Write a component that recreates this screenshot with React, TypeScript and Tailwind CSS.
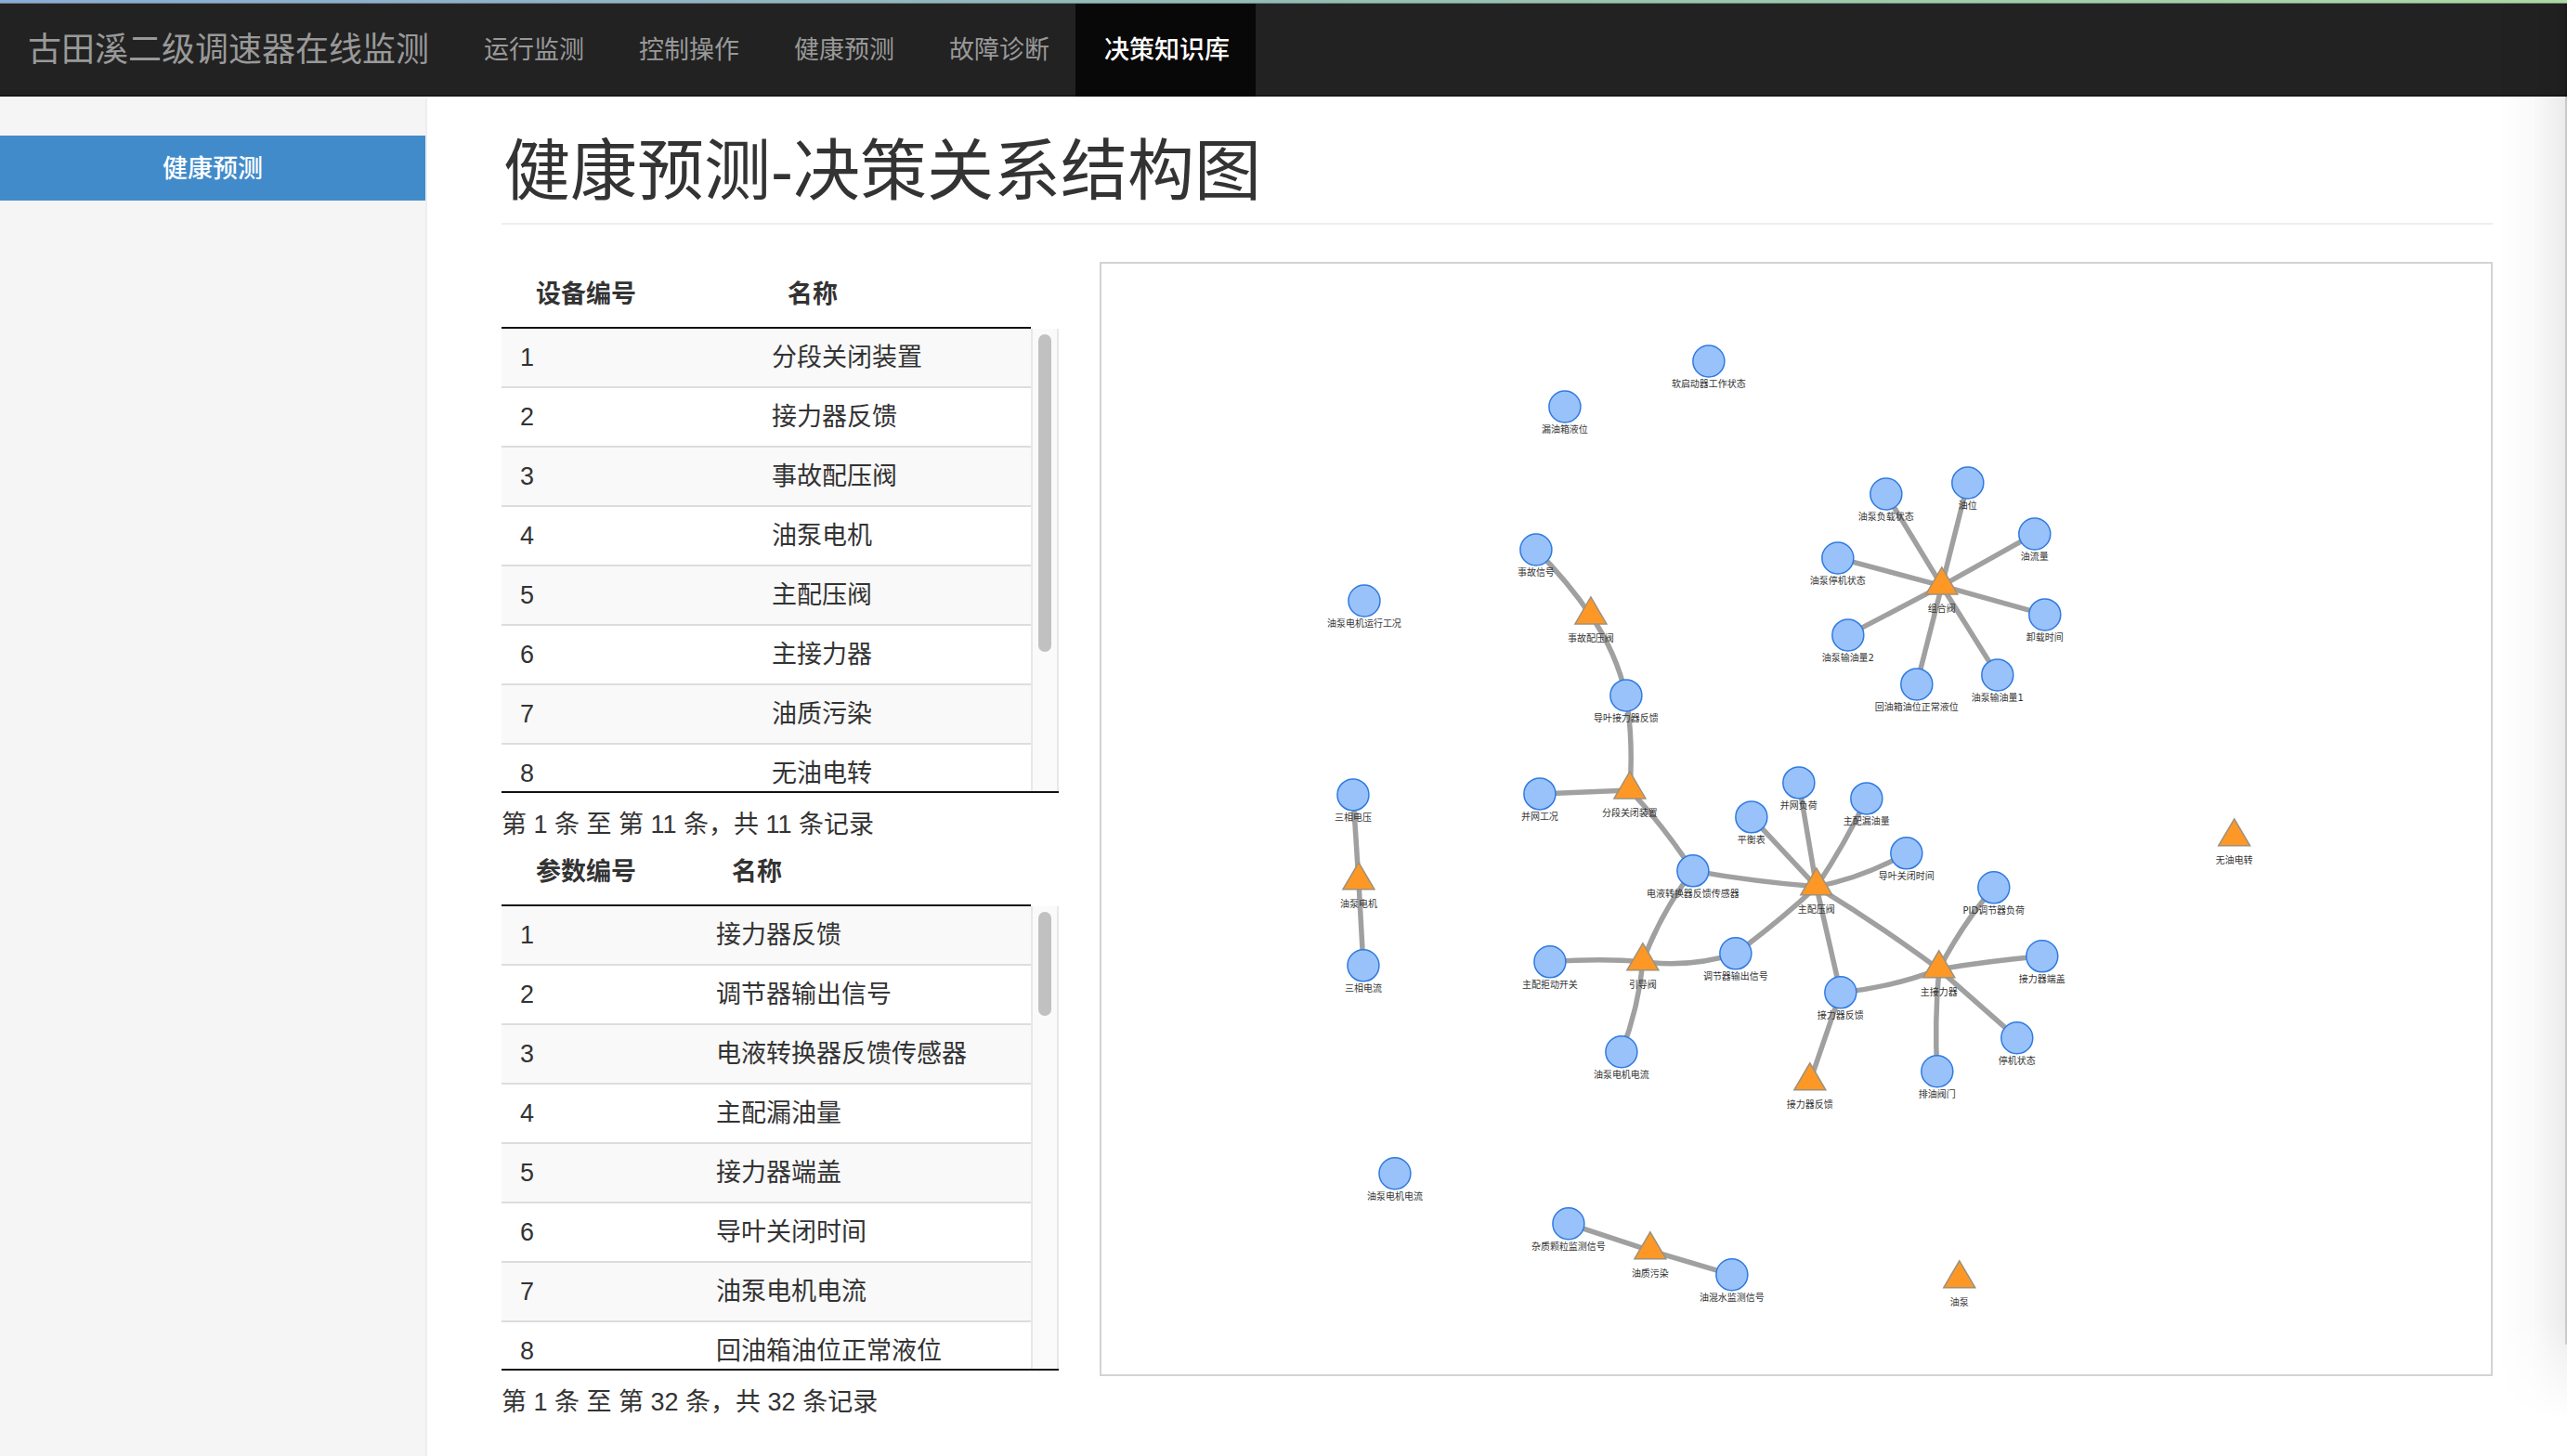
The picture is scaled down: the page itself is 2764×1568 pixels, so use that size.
const FONT = "font-['Liberation_Sans','Noto_Sans_CJK_SC',sans-serif]";

type NodeDef = { id: string; x: number; y: number; label: string; device?: boolean };
type EdgeDef = { from: string; to: string; via?: [number, number] };

const navItems = ["运行监测", "控制操作", "健康预测", "故障诊断", "决策知识库"];

const devices = ["分段关闭装置", "接力器反馈", "事故配压阀", "油泵电机", "主配压阀", "主接力器", "油质污染", "无油电转"];
const params = ["接力器反馈", "调节器输出信号", "电液转换器反馈传感器", "主配漏油量", "接力器端盖", "导叶关闭时间", "油泵电机电流", "回油箱油位正常液位"];

const nodes: NodeDef[] = [
  { id: "soft", x: 1840, y: 389, label: "软启动器工作状态" },
  { id: "leakTank", x: 1685, y: 438, label: "漏油箱液位" },
  { id: "accSignal", x: 1654, y: 592, label: "事故信号" },
  { id: "pumpRun", x: 1469, y: 647, label: "油泵电机运行工况" },
  { id: "vaneFeedback", x: 1751, y: 749, label: "导叶接力器反馈" },
  { id: "accValve", x: 1713, y: 663, label: "事故配压阀", device: true },
  { id: "pumpLoad", x: 2031, y: 532, label: "油泵负载状态" },
  { id: "oilLevel", x: 2119, y: 520, label: "油位" },
  { id: "oilFlow", x: 2191, y: 575, label: "油流量" },
  { id: "pumpStop", x: 1979, y: 601, label: "油泵停机状态" },
  { id: "pumpOut2", x: 1990, y: 684, label: "油泵输油量2" },
  { id: "returnTank", x: 2064, y: 737, label: "回油箱油位正常液位" },
  { id: "pumpOut1", x: 2151, y: 727, label: "油泵输油量1" },
  { id: "unload", x: 2202, y: 662, label: "卸载时间" },
  { id: "combo", x: 2091, y: 631, label: "组合阀", device: true },
  { id: "voltage", x: 1457, y: 856, label: "三相电压" },
  { id: "pumpMotor", x: 1463, y: 949, label: "油泵电机", device: true },
  { id: "current", x: 1468, y: 1040, label: "三相电流" },
  { id: "gridState", x: 1658, y: 855, label: "并网工况" },
  { id: "segment", x: 1755, y: 851, label: "分段关闭装置", device: true },
  { id: "ehSensor", x: 1823, y: 938, label: "电液转换器反馈传感器" },
  { id: "refuse", x: 1669, y: 1036, label: "主配拒动开关" },
  { id: "pilot", x: 1769, y: 1036, label: "引导阀", device: true },
  { id: "motorCurrent", x: 1746, y: 1133, label: "油泵电机电流" },
  { id: "regulator", x: 1869, y: 1027, label: "调节器输出信号" },
  { id: "gridLoad", x: 1937, y: 843, label: "并网负荷" },
  { id: "mainLeak", x: 2010, y: 860, label: "主配漏油量" },
  { id: "balance", x: 1886, y: 880, label: "平衡表" },
  { id: "vaneTime", x: 2053, y: 919, label: "导叶关闭时间" },
  { id: "mainValve", x: 1956, y: 955, label: "主配压阀", device: true },
  { id: "pidLoad", x: 2147, y: 956, label: "PID调节器负荷" },
  { id: "cover", x: 2199, y: 1030, label: "接力器端盖" },
  { id: "stopState", x: 2172, y: 1118, label: "停机状态" },
  { id: "drain", x: 2086, y: 1154, label: "排油阀门" },
  { id: "servoParam", x: 1982, y: 1069, label: "接力器反馈" },
  { id: "mainServo", x: 2088, y: 1044, label: "主接力器", device: true },
  { id: "servoDevice", x: 1949, y: 1165, label: "接力器反馈", device: true },
  { id: "motorCurrent2", x: 1502, y: 1264, label: "油泵电机电流" },
  { id: "particles", x: 1689, y: 1318, label: "杂质颗粒监测信号" },
  { id: "pollution", x: 1777, y: 1347, label: "油质污染", device: true },
  { id: "water", x: 1865, y: 1373, label: "油混水监测信号" },
  { id: "pump", x: 2110, y: 1378, label: "油泵", device: true },
  { id: "oilless", x: 2406, y: 902, label: "无油电转", device: true },
];

// "via" is the point that the middle of a curved edge passes through.
const edges: EdgeDef[] = [
  { from: "accSignal", to: "accValve", via: [1686, 627] },
  { from: "accValve", to: "vaneFeedback", via: [1736, 704] },
  { from: "vaneFeedback", to: "segment", via: [1756, 799] },
  { from: "gridState", to: "segment" },
  { from: "segment", to: "ehSensor", via: [1791, 893] },
  { from: "ehSensor", to: "pilot", via: [1792, 985] },
  { from: "refuse", to: "pilot", via: [1722, 1034] },
  { from: "pilot", to: "regulator", via: [1820, 1037] },
  { from: "pilot", to: "motorCurrent", via: [1761, 1085] },
  { from: "voltage", to: "pumpMotor" },
  { from: "pumpMotor", to: "current" },
  { from: "ehSensor", to: "mainValve", via: [1889, 948] },
  { from: "balance", to: "mainValve" },
  { from: "gridLoad", to: "mainValve" },
  { from: "mainLeak", to: "mainValve", via: [1985, 908] },
  { from: "vaneTime", to: "mainValve", via: [2006, 941] },
  { from: "mainValve", to: "regulator", via: [1914, 992] },
  { from: "mainValve", to: "servoParam" },
  { from: "mainValve", to: "mainServo", via: [2023, 998] },
  { from: "servoParam", to: "mainServo", via: [2036, 1060] },
  { from: "servoParam", to: "servoDevice" },
  { from: "pidLoad", to: "mainServo", via: [2115, 998] },
  { from: "cover", to: "mainServo", via: [2143, 1036] },
  { from: "stopState", to: "mainServo" },
  { from: "drain", to: "mainServo", via: [2085, 1100] },
  { from: "pumpLoad", to: "combo" },
  { from: "oilLevel", to: "combo" },
  { from: "oilFlow", to: "combo" },
  { from: "pumpStop", to: "combo" },
  { from: "pumpOut2", to: "combo" },
  { from: "returnTank", to: "combo" },
  { from: "pumpOut1", to: "combo" },
  { from: "unload", to: "combo" },
  { from: "particles", to: "pollution" },
  { from: "pollution", to: "water" },
];

const byId = new Map(nodes.map((n) => [n.id, n]));

function edgePath({ from, to, via }: EdgeDef) {
  const a = byId.get(from)!;
  const b = byId.get(to)!;
  if (!via) return `M${a.x} ${a.y}L${b.x} ${b.y}`;
  const cx = 2 * via[0] - (a.x + b.x) / 2;
  const cy = 2 * via[1] - (a.y + b.y) / 2;
  return `M${a.x} ${a.y}Q${cx} ${cy} ${b.x} ${b.y}`;
}

function RelationGraph() {
  return (
    <svg viewBox="1186 284 1496 1196" className="block h-auto w-full" role="img" aria-label="决策关系结构图">
      <g fill="none" stroke="#a0a0a0" strokeWidth="5.5">
        {edges.map((e) => (
          <path key={e.from + e.to} d={edgePath(e)} />
        ))}
      </g>
      {nodes.map((n) => (
        <g key={n.id}>
          {n.device ? (
            <path
              d={`M${n.x} ${n.y - 20}L${n.x + 17} ${n.y + 9}H${n.x - 17}Z`}
              fill="#fd9827"
              stroke="#9e917c"
              strokeWidth="1.5"
            />
          ) : (
            <circle cx={n.x} cy={n.y} r="17" fill="#9ac2fa" stroke="#2f7be0" strokeWidth="1.5" />
          )}
          <text
            x={n.x}
            y={n.y + 28}
            textAnchor="middle"
            className="fill-[#343434] font-['DejaVu_Sans','Noto_Sans_CJK_SC',sans-serif] text-[10px]"
          >
            {n.label}
          </text>
        </g>
      ))}
    </svg>
  );
}

type RecordTableProps = {
  idTitle: string;
  rows: string[];
  total: number;
  idColumn: string;
  thumb: string;
};

function RecordTable({ idTitle, rows, total, idColumn, thumb }: RecordTableProps) {
  return (
    <section>
      <div className="flex h-[572px] overflow-hidden border-b-2 border-[#111]">
        <div className="min-w-0 flex-1">
          <table className="w-full table-fixed border-separate border-spacing-0 text-left">
            <thead>
              <tr className="h-[72px]">
                <th className={`${idColumn} border-b-2 border-[#111] pl-[37px] font-bold`}>{idTitle}</th>
                <th className="border-b-2 border-[#111] pl-[37px] font-bold">名称</th>
              </tr>
            </thead>
            <tbody>
              {rows.map((name, i) => (
                <tr
                  key={name}
                  className="h-16 odd:bg-[#f9f9f9] first:h-[62px] [&>td]:border-t-2 [&>td]:border-[#ddd] first:[&>td]:border-t-0"
                >
                  <td className="pl-5">{i + 1}</td>
                  <td className="pl-5 whitespace-nowrap">{name}</td>
                </tr>
              ))}
            </tbody>
          </table>
        </div>
        <div className="mt-[72px] w-[30px] border-x-2 border-[#e8e8e8] bg-[#fafafa] px-[6px] pt-1.5">
          <div className={`${thumb} w-full rounded-full bg-[#c1c1c1]`} />
        </div>
      </div>
      <p className="pt-[18px] leading-8">
        第 1 条 至 第 {total} 条，共 {total} 条记录
      </p>
    </section>
  );
}

export default function App() {
  return (
    <div className={`${FONT} relative flex min-h-screen flex-col bg-white text-[27px] leading-10 text-[#333]`}>
      <div className="h-1 border-b border-[#777] bg-linear-to-r from-[#86aedb] via-[#92bfb4] to-[#a9dba0]" />
      <header className="flex h-[100px] items-stretch border-b-2 border-[#181818] bg-[#222]">
        <a href="#" className="flex items-center pt-0.5 pr-7 pl-[30px] text-4xl text-[#999]">
          古田溪二级调速器在线监测
        </a>
        <nav className="-mb-0.5 flex">
          {navItems.map((item) => (
            <a
              key={item}
              href="#"
              className="flex items-center pr-7 pl-[31px] text-[#999] last:bg-[#080808] last:font-medium last:text-white"
            >
              {item}
            </a>
          ))}
        </nav>
      </header>
      <div className="mt-0.5 flex flex-1">
        <aside className="w-[460px] shrink-0 border-r-2 border-[#eee] bg-[#f5f5f5] pt-10">
          <a href="#" className="block bg-[#428bca] pt-4 pb-3.5 text-center font-medium text-white">
            健康预测
          </a>
        </aside>
        <main className="min-w-0 flex-1 px-20 pt-9">
          <h1 className="border-b-2 border-[#eee] pt-0.5 pb-4 pl-0.5 text-7xl leading-[80px]">健康预测-决策关系结构图</h1>
          <div className="mt-10 flex items-start gap-11">
            <div className="w-[28%] shrink-0">
              <RecordTable idTitle="设备编号" rows={devices} total={11} idColumn="w-[271px]" thumb="h-[342px]" />
              <RecordTable idTitle="参数编号" rows={params} total={32} idColumn="w-[211px]" thumb="h-[112px]" />
            </div>
            <div className="min-w-0 flex-1 border-2 border-[#d3d3d3]">
              <RelationGraph />
            </div>
          </div>
        </main>
      </div>
      <div
        aria-hidden="true"
        className="pointer-events-none absolute top-1 right-0 bottom-10 w-[74px] bg-linear-to-r from-transparent via-black/2 to-black/8 [mask-image:linear-gradient(to_top,transparent,black_110px)]"
      />
      <div aria-hidden="true" className="pointer-events-none absolute top-1 right-0 bottom-[120px] w-0.5 bg-black/15" />
    </div>
  );
}
